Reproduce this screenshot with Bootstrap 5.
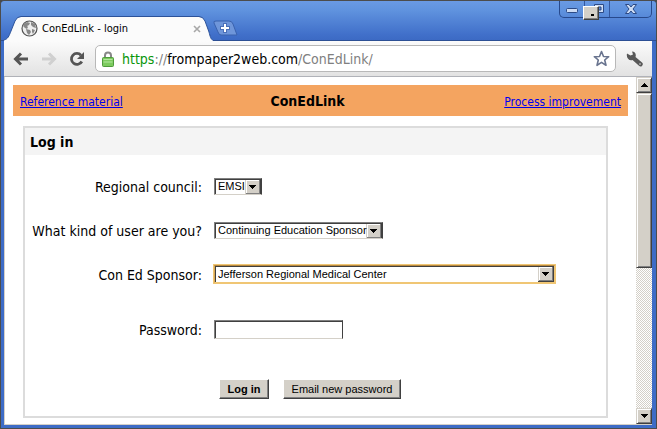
<!DOCTYPE html>
<html lang="en">
<head>
<meta charset="utf-8">
<meta name="viewport" content="width=device-width, initial-scale=1">
<title>ConEdLink - login</title>
<link rel="stylesheet" href="https://cdn.jsdelivr.net/npm/bootstrap@5.3.0/dist/css/bootstrap.min.css">
<style>
body { font-family: "DejaVu Sans Condensed", "Noto Sans", sans-serif; font-size: 14px; line-height: 18px; color: #000; background: #4a4a4a; }
button { color: inherit; }
.browser { background: #3d6cc6; border: 1px solid #4c4c4c; border-radius: 4px 4px 0 0; padding: 0 4px 3px 3px; }
.titlebar { height: 40px; margin: 0 -4px 0 -3px; padding: 0 4px 0 3px; background: linear-gradient(#6a9ae4, #5f92de 25%, #4170ca 85%, #3c6ac4); border-radius: 3px 3px 0 0; border-bottom: 1px solid #2c4f94; }
.tab { width: 209px; height: 25px; padding: 0 12px 0 17px; margin-bottom: -1px; font-size: 11px; }
.tab-shape { position: absolute; left: 0; top: 0; z-index: 0; }
.tab > :not(.tab-shape) { position: relative; z-index: 1; }
.plain { background: none; border: 0; padding: 0; line-height: 0; }
.newtab { margin-bottom: 4px; }
.winctl { height: 17px; width: 93px; border: 1px solid #27498c; border-top: 0; border-radius: 0 0 5px 5px; }
.winctl button { width: 25px; height: 16px; border-right: 1px solid #34589f; }
.winctl button:last-of-type { flex: 1; border: 0; }
.mini { position: absolute; left: 23px; top: 5px; width: 16px; height: 14px; background: #d4d0c8; border: 1px solid; border-color: #fff #404040 #404040 #fff; box-shadow: inset -1px -1px #808080; }
.mini::after { content: ""; position: absolute; right: 4px; bottom: 3px; width: 3px; height: 2px; background: #000; }
.toolbar { height: 36px; padding: 0 9px; background: linear-gradient(#fbfbfb, #e2e2e2); border-bottom: 1px solid #b0b2b8; }
.omnibox { height: 27px; border: 1px solid #b8b8b8; border-radius: 5px; padding: 0 5px 0 6px; margin: 0 10px; background: #fff; }
.address { font-size: 14px; line-height: 20px; color: #808080; }
.scheme { color: #0a960a; }
.viewport { background: #fff; border: 1px solid #d4d0c8; border-top: 0; border-right: 0; min-height: 0; }
.page { padding: 8px; }
.banner { height: 31px; background: #f4a460; padding: 2px 7px 0; font-size: 12px; }
.banner a { color: #00e; }
.banner-title { font-size: 14px; margin: 0; font-weight: 700; }
.panel { margin: 10px 20px 0 10px; border: 2px solid #dcdcdc; }
.panel-title { height: 27px; margin: 0; padding: 5px; font-size: 14px; line-height: 18px; font-weight: 700; background: #f4f4f4; }
.fields { padding: 19px 0 15px; gap: 20px; }
.field-row { height: 24px; gap: 12px; }
.field-row label { flex: 0 0 177px; text-align: right; padding-top: 2px; }
.classic { appearance: none; font: 11px/13px "Liberation Sans", Arial, sans-serif; color: #000; border: 1px solid; border-color: #808080 #404040 #d4d0c8 #808080; border-radius: 0; box-shadow: inset 1px 1px #404040; outline: 0; }
select.classic { height: 17px; padding: 1px 15px 0 3px; background: #fff url("data:image/svg+xml,%3Csvg xmlns='http://www.w3.org/2000/svg' width='16' height='16' shape-rendering='crispEdges'%3E%3Cpath fill='%23404040' d='M0 0h16v16H0z'/%3E%3Cpath fill='%23d4d0c8' d='M0 0h15v15H0z'/%3E%3Cpath fill='%23808080' d='M1 1h14v14H1z'/%3E%3Cpath fill='%23fff' d='M1 1h13v13H1z'/%3E%3Cpath fill='%23d4d0c8' d='M2 2h12v12H2z'/%3E%3Cpath d='M4 6h7v1H4zM5 7h5v1H5zM6 8h3v1H6zM7 9h1v1H7z'/%3E%3C/svg%3E") no-repeat right top; }
.w-council { width: 48px; }
.w-kind { width: 169px; }
.w-sponsor { width: 341px; }
.w-pass { width: 129px; height: 19px; }
select.ringed { height: 18px; box-shadow: inset 1px 1px #404040, 0 0 0 1px #f0c674; border-color: #b9893f #f0c674 #f0c674 #d9a855; }
.push { margin-top: 11px; }
.push-more { margin-top: 16px; padding-left: 194px; gap: 14px; }
.classic-btn { height: 20px; padding: 0 7px; font: 11px/16px "Liberation Sans", Arial, sans-serif; background: #d4d0c8; border: 1px solid; border-color: #fff #404040 #404040 #fff; box-shadow: inset -1px -1px #808080; }
.w-login { width: 50px; }
.w-email { width: 118px; }
.scroller { width: 16px; background: repeating-conic-gradient(#d4d0c8 0 25%, #fff 0 50%) 0 0 / 2px 2px; }
.scroller .cap, .thumb { background: #d4d0c8; border: 1px solid; border-color: #d4d0c8 #404040 #404040 #d4d0c8; box-shadow: inset 1px 1px #fff, inset -1px -1px #808080; }
.scroller .cap { height: 16px; padding: 0; line-height: 0; }
.thumb { height: 175px; }
</style>
<script src="https://cdn.jsdelivr.net/npm/bootstrap@5.3.0/dist/js/bootstrap.bundle.min.js"></script>
</head>
<body>
<div class="browser vh-100 d-flex flex-column overflow-hidden">
  <header class="titlebar d-flex flex-shrink-0 align-items-end">
    <div class="tab position-relative d-flex align-items-center flex-shrink-0">
      <svg class="tab-shape" width="209" height="25" aria-hidden="true"><path d="M0 25V24C4 23 5 20 7 15L11 5Q13 1 17 1H195Q199 1 201 5L205 16C206 20 207 24 209 24V25Z" fill="#fbfbfb"/><path d="M0 24C4 23 5 20 7 15L11 5Q13 .5 17 .5H195Q199 .5 201 5L205 16C206 20 207 24 209 24" fill="none" stroke="#2c5299"/></svg>
      <svg width="17" height="17" viewBox="0 0 17 17" aria-hidden="true"><circle cx="8.500" cy="8.500" r="7.500" fill="#eee" stroke="#555" stroke-width="1.200"/><path d="M3 4l3-2 3 1-1 2-2 1 1 1-1 2-2-1-2-2zM10 2l4 2 1 4-3-1-2-2zM5 9l4 1 1 2-2 3-2-2zM11 9l3 1-2 4-1-2z" fill="#888"/></svg>
      <span class="ms-1 me-auto">ConEdLink - login</span>
      <button type="button" class="plain" aria-label="Close tab"><svg width="8" height="8"><path d="M1 1l6 6M7 1L1 7" stroke="#a8a8a8" stroke-width="1.600"/></svg></button>
    </div>
    <button type="button" class="plain newtab" aria-label="New tab"><svg width="25" height="16"><path d="M3 1H16Q19 1 20 4L24 15H8Q6 15 5 12L1 3Q0 1 3 1Z" fill="#6f96da" stroke="#3a62ae"/><path d="M12 3v10M7 8h10" stroke="#4a6fb8" stroke-width="4"/><path d="M12 4v8M8 8h8" stroke="#fff" stroke-width="2"/></svg></button>
    <div class="winctl d-flex position-relative ms-auto align-self-start">
      <button type="button" class="plain" aria-label="Minimize"><svg width="14" height="14"><rect x="1.500" y="6.500" width="11" height="4" rx="1" fill="#cddcf4" stroke="#2c4a86"/></svg></button>
      <button type="button" class="plain" aria-label="Restore"><svg width="16" height="14"><path d="M5.500 2.500h9v8h-9z" fill="#cddcf4" stroke="#2c4a86"/><path d="M9 5h3v3H9z" fill="#5f8cda" stroke="#2c4a86"/></svg></button>
      <button type="button" class="plain" aria-label="Close"><svg width="14" height="14"><path d="M1.500 2.500H5L7 5 9 2.500h3.500L9 7l3.500 4.500H9L7 9l-2 2.500H1.500L5 7Z" fill="#cddcf4" stroke="#2c4a86"/></svg></button>
      <span class="mini"></span>
    </div>
  </header>

  <nav class="toolbar d-flex flex-shrink-0 align-items-center" aria-label="Browser">
    <button type="button" class="plain" aria-label="Back"><svg width="16" height="14"><path d="M15 7H3M8 1.500L2.500 7 8 12.500" fill="none" stroke="#555" stroke-width="3"/></svg></button>
    <button type="button" class="plain ms-2 ps-1" aria-label="Forward"><svg width="16" height="14"><path d="M1 7h12M8 1.500L13.500 7 8 12.500" fill="none" stroke="#d0d0d0" stroke-width="3"/></svg></button>
    <button type="button" class="plain ms-2 ps-1" aria-label="Reload"><svg width="16" height="16"><path d="M12 4.200A5.500 5.500 0 1 0 12.800 10.500" fill="none" stroke="#555" stroke-width="2.800"/><path d="M15 1v7H8Z" fill="#555"/></svg></button>
    <div class="omnibox d-flex align-items-center flex-grow-1">
      <svg width="12" height="16" aria-hidden="true"><path d="M3 8V4.500a3 3 0 0 1 6 0V8" fill="none" stroke="#888" stroke-width="2"/><rect x=".5" y="6.500" width="11" height="9" rx="1" fill="#7ccb5e" stroke="#4f9b3c"/><path d="M1.500 8.500h9M1.500 11h9" stroke="#b4e6a0"/></svg>
      <span class="address ms-2 me-auto"><span class="scheme">https</span>://<span class="text-black">frompaper2web.com</span>/ConEdLink/</span>
      <button type="button" class="plain" aria-label="Bookmark this page"><svg width="17" height="17"><path d="M8.500 1.500l2 5 5.200.2-4 3.300 1.300 5.300-4.500-3-4.500 3 1.300-5.300-4-3.300 5.200-.2Z" fill="#fff" stroke="#69748f" stroke-width="1.600" stroke-linejoin="round"/></svg></button>
    </div>
    <button type="button" class="plain" aria-label="Settings"><svg width="17" height="16"><path d="M1 2.500l3.500 2L7 3.500 6 .5C9 .5 10.500 3 9.500 6L16 11.500a2 2 0 0 1-3 3.300L6.500 9C3 10 0 7 1 2.500Z" fill="#585858"/><circle cx="14" cy="13" r="1" fill="#aaa"/></svg></button>
  </nav>

  <div class="viewport d-flex flex-grow-1">
    <main class="page flex-grow-1">
      <div class="banner d-flex align-items-center">
        <div class="col-5"><a href="#">Reference material</a></div>
        <h1 class="banner-title">ConEdLink</h1>
        <div class="col text-end"><a href="#">Process improvement</a></div>
      </div>
      <section class="panel">
        <h2 class="panel-title">Log in</h2>
        <form class="fields d-flex flex-column">
          <div class="field-row d-flex align-items-center">
            <label for="council">Regional council:</label>
            <select id="council" class="classic w-council"><option>EMSI</option></select>
          </div>
          <div class="field-row d-flex align-items-center">
            <label for="kind">What kind of user are you?</label>
            <select id="kind" class="classic w-kind"><option>Continuing Education Sponsor</option></select>
          </div>
          <div class="field-row d-flex align-items-center">
            <label for="sponsor">Con Ed Sponsor:</label>
            <select id="sponsor" class="classic w-sponsor ringed"><option>Jefferson Regional Medical Center</option></select>
          </div>
          <div class="field-row push d-flex align-items-center">
            <label for="password">Password:</label>
            <input id="password" type="password" class="classic w-pass">
          </div>
          <div class="field-row push-more d-flex align-items-center">
            <button type="button" class="classic-btn w-login fw-bold">Log in</button>
            <button type="button" class="classic-btn w-email">Email new password</button>
          </div>
        </form>
      </section>
    </main>
    <div class="scroller d-flex flex-column flex-shrink-0">
      <button type="button" class="cap" aria-label="Scroll up"><svg width="7" height="4" shape-rendering="crispEdges"><path d="M3 0h1v1H3zM2 1h3v1H2zM1 2h5v1H1zM0 3h7v1H0z"/></svg></button>
      <div class="thumb"></div>
      <button type="button" class="cap mt-auto" aria-label="Scroll down"><svg width="7" height="4" shape-rendering="crispEdges"><path d="M0 0h7v1H0zM1 1h5v1H1zM2 2h3v1H2zM3 3h1v1H3z"/></svg></button>
    </div>
  </div>
</div>
</body>
</html>
